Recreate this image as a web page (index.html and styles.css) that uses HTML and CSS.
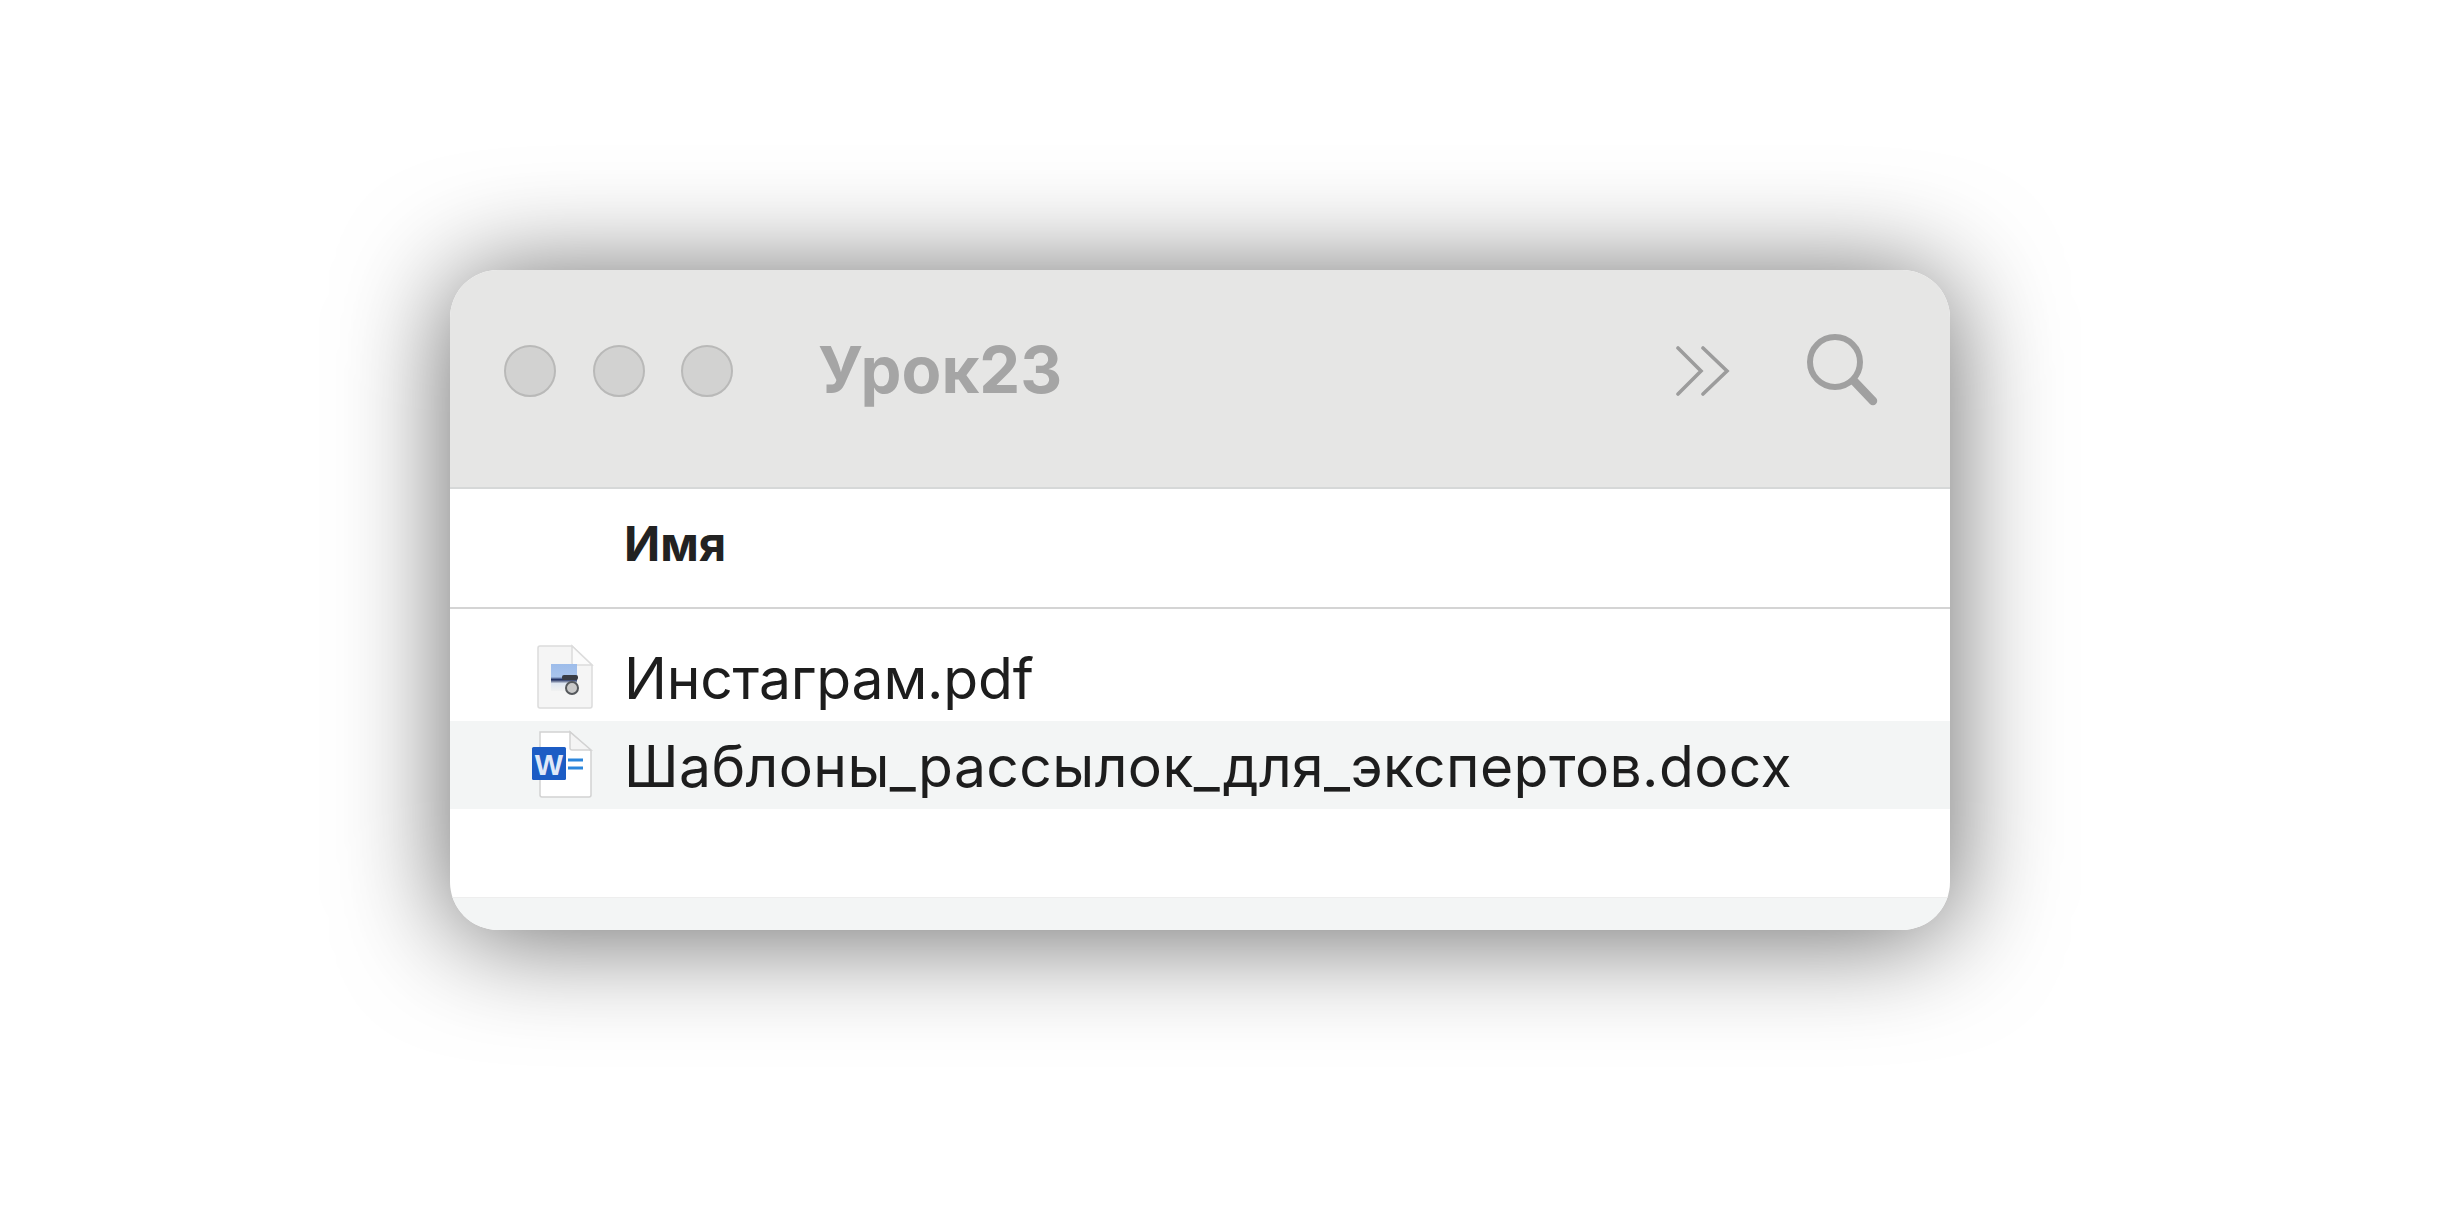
FILE: index.html
```html
<!DOCTYPE html>
<html lang="ru">
<head>
    <meta charset="UTF-8">
    <title>Урок23</title>
    <link rel="stylesheet" href="styles.css">
</head>
<body>
    <div class="window">
        <div class="titlebar">
            <div class="dots">
                <span class="dot"></span>
                <span class="dot"></span>
                <span class="dot"></span>
            </div>
            <div class="title">Урок23</div>
            <svg class="chevrons" width="54" height="50" viewBox="0 0 54 50">
                <path d="M2 2 L25 25 L2 48 M27 2 L51 25 L27 48" fill="none" stroke="#9c9c9c" stroke-width="3.6" stroke-linecap="round"/>
            </svg>
            <svg class="search" width="72" height="74" viewBox="0 0 72 74">
                <circle cx="28" cy="28" r="25" fill="none" stroke="#a0a0a0" stroke-width="6"/>
                <path d="M47 47 L66 67" fill="none" stroke="#a0a0a0" stroke-width="8.5" stroke-linecap="round"/>
            </svg>
        </div>

        <div class="list-header">Имя</div>

        <div class="rows">
            <div class="row">
                <svg class="file-icon" width="60" height="68" viewBox="-3 0 60 68">
                    <defs>
                        <linearGradient id="thumb" x1="0" y1="0" x2="0" y2="1">
                            <stop offset="0" stop-color="#9dbcea"/>
                            <stop offset="0.48" stop-color="#a9c4ec"/>
                            <stop offset="0.58" stop-color="#1b2a5c"/>
                            <stop offset="0.72" stop-color="#dfe7f2"/>
                            <stop offset="1" stop-color="#f1f1f1"/>
                        </linearGradient>
                    </defs>
                    <path d="M5 3 H37 L57 22 V63 Q57 65 55 65 H5 Q3 65 3 63 V5 Q3 3 5 3 Z" fill="#f5f5f5" stroke="#dcdcdc" stroke-width="1.5"/>
                    <path d="M37 3 V20 Q37 22 39 22 H57 Z" fill="#fbfbfb" stroke="#dcdcdc" stroke-width="1.5"/>
                    <rect x="16" y="21" width="26" height="27" fill="url(#thumb)"/>
                    <rect x="27" y="32" width="16" height="5" rx="2" fill="#3a3d44"/>
                    <circle cx="37" cy="45" r="6" fill="#c9c9c9" stroke="#55585c" stroke-width="2"/>
                </svg>
                <span class="file-name file-name-short">Инстаграм.pdf</span>
            </div>
            <div class="row row-alt">
                <svg class="file-icon" width="60" height="68" viewBox="0 0 60 68">
                    <path d="M8 1 H38 L59 20 V64 Q59 66 57 66 H10 Q8 66 8 64 Z" fill="#ffffff" stroke="#d2d2d2" stroke-width="1.5"/>
                    <path d="M38 1 V17 Q38 19 40 19 H59 Z" fill="#f4f4f4" stroke="#d2d2d2" stroke-width="1.5"/>
                    <rect x="0" y="16" width="34" height="33" rx="1.5" fill="#1c5cc4"/>
                    <text class="word-letter" x="17" y="44" text-anchor="middle">W</text>
                    <path d="M36 29 H51 M36 37 H51" stroke="#2b86dc" stroke-width="3"/>
                </svg>
                <span class="file-name file-name-long">Шаблоны_рассылок_для_экспертов.docx</span>
            </div>
        </div>

        <div class="footer"></div>
    </div>
</body>
</html>
```

FILE: styles.css
```css
html, body {
    margin: 0;
    padding: 0;
}

body {
    height: 1230px;
    box-sizing: border-box;
    padding: 270px 0 0 450px;
    background-color: #ffffff;
    font-family: Inter, "Liberation Sans", Arial, sans-serif;
    overflow: hidden;
}

.window {
    width: 1500px;
    height: 660px;
    display: flex;
    flex-direction: column;
    background-color: #ffffff;
    border-radius: 48px;
    overflow: hidden;
    box-shadow: 0 6px 110px rgba(0, 0, 0, 0.6);
}

.titlebar {
    height: 219px;
    flex-shrink: 0;
    box-sizing: border-box;
    display: flex;
    align-items: flex-start;
    padding: 75px 0 0 54px;
    background-color: #e6e6e5;
    border-bottom: 2px solid #d6d8d8;
}

.dots {
    display: flex;
    gap: 36.5px;
}

.dot {
    width: 52px;
    height: 52px;
    box-sizing: border-box;
    border-radius: 50%;
    background-color: #d2d2d1;
    border: 2px solid #b9b9b8;
}

.title {
    width: 240px;
    margin: -13px 0 0 85px;
    font-size: 65px;
    line-height: 76px;
    font-weight: bold;
    color: #a5a5a5;
    white-space: nowrap;
}

.chevrons {
    margin: 1px 0 0 auto;
}

.search {
    margin: -11px 71px 0 77px;
}

.list-header {
    height: 120px;
    flex-shrink: 0;
    box-sizing: border-box;
    padding: 25px 0 0 174px;
    font-size: 47.5px;
    line-height: 60px;
    font-weight: bold;
    color: #222222;
    border-bottom: 2px solid #d4d4d4;
}

.rows {
    flex: 1;
    padding-top: 24px;
}

.row {
    height: 88px;
    display: flex;
    align-items: center;
    padding-left: 82px;
}

.row-alt {
    background-color: #f3f5f5;
}

.file-icon {
    flex-shrink: 0;
    overflow: visible;
}

.file-name {
    margin-left: 32px;
    padding-top: 3px;
    font-size: 57px;
    line-height: 85px;
    color: #1d1d1d;
    white-space: nowrap;
}

.file-name-short {
    letter-spacing: -0.2px;
}

.file-name-long {
    letter-spacing: 0.4px;
}

.word-letter {
    font-family: "Liberation Sans", Arial, sans-serif;
    font-size: 30px;
    font-weight: bold;
    fill: #dfe8f8;
}

.footer {
    height: 33px;
    flex-shrink: 0;
    box-sizing: border-box;
    background-color: #f3f5f5;
    border-top: 1px solid #eeeeee;
}
```
